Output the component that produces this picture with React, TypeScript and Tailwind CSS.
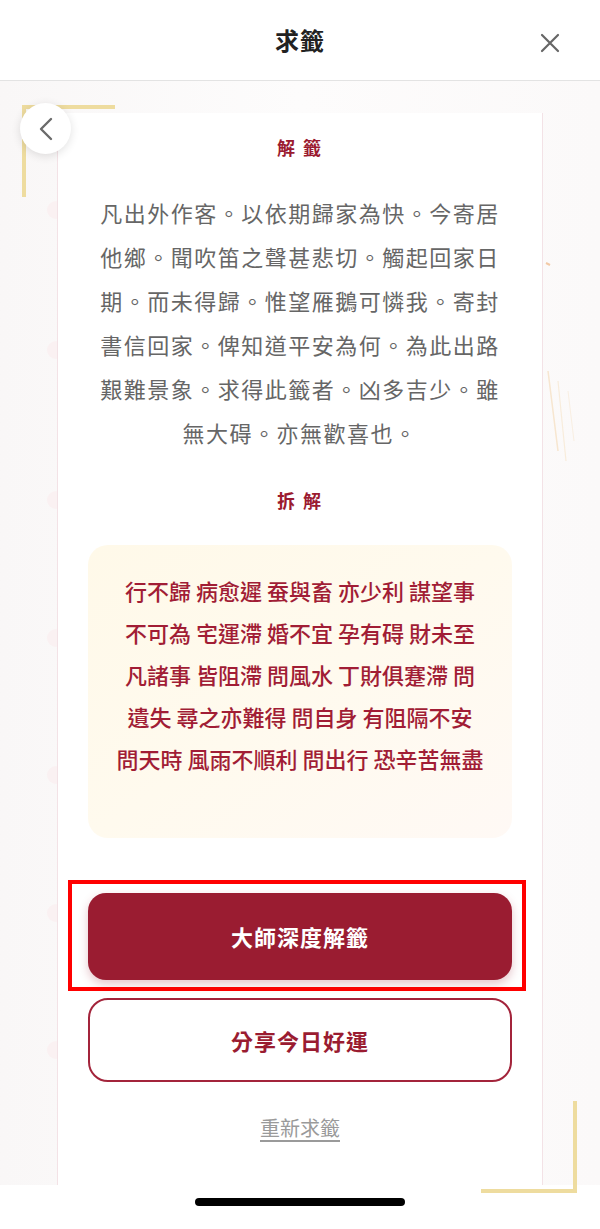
import React from "react";

const FONT = {
  fontFamily: '"Noto Sans CJK TC", "Noto Sans", sans-serif',
};

const INTERPRETATION =
  "凡出外作客。以依期歸家為快。今寄居他鄉。聞吹笛之聲甚悲切。觸起回家日期。而未得歸。惟望雁鵝可憐我。寄封書信回家。俾知道平安為何。為此出路艱難景象。求得此籤者。凶多吉少。雖無大碍。亦無歡喜也。";

const BREAKDOWN = [
  "行不歸 病愈遲 蚕與畜 亦少利 謀望事",
  "不可為 宅運滯 婚不宜 孕有碍 財未至",
  "凡諸事 皆阻滯 問風水 丁財俱蹇滯 問",
  "遺失 尋之亦難得 問自身 有阻隔不安",
  "問天時 風雨不順利 問出行 恐辛苦無盡",
];

// faint pink knobs peeking out behind the left edge of the card
const KNOBS = [210, 350, 500, 638, 775, 913, 1050];

const CloseIcon = () => (
  <svg width="20" height="20" viewBox="0 0 20 20" fill="none">
    <path
      d="M2 2L18 18M18 2L2 18"
      stroke="#666"
      strokeWidth="2.2"
      strokeLinecap="round"
    />
  </svg>
);

const BackIcon = () => (
  <svg width="14" height="24" viewBox="0 0 14 24" fill="none">
    <path
      d="M12 2L2 12L12 22"
      stroke="#6b6b6b"
      strokeWidth="2.4"
      strokeLinecap="round"
      strokeLinejoin="round"
    />
  </svg>
);

const Sparks = () => (
  <svg
    className="absolute left-[540px] top-[170px]"
    width="60"
    height="260"
    viewBox="0 0 60 260"
    fill="none"
  >
    <path d="M6 12L10 14" stroke="#f2c9a6" strokeWidth="2" />
    <path d="M8 120L18 200" stroke="#f7e6d0" strokeWidth="1.5" />
    <path d="M18 130L26 210" stroke="#f8ecdb" strokeWidth="1.2" />
    <path d="M28 140L34 190" stroke="#f9efe2" strokeWidth="1" />
  </svg>
);

const Heading = ({ children }: { children: React.ReactNode }) => (
  <h2 className="text-[18px] leading-[20px] font-bold tracking-[2px] text-[#9b1b30] whitespace-pre">
    {children}
  </h2>
);

export default function App() {
  return (
    <div
      className="relative flex h-[1229px] w-[600px] flex-col overflow-hidden bg-white"
      style={FONT}
    >
      {/* top bar */}
      <header className="relative flex h-[81px] shrink-0 items-center justify-center border-b border-[#e3e3e3] bg-white">
        <h1 className="text-[24px] font-bold tracking-[1px] text-[#222]">
          求籤
        </h1>
        <button className="absolute right-[40px] top-[33px]">
          <CloseIcon />
        </button>
      </header>

      <main className="relative flex-1 bg-gradient-to-r from-[#f9f7f7] via-[#fdfcfc] to-[#fbf9f9]">
        {KNOBS.map((y) => (
          <div
            key={y}
            className="absolute left-[47px] h-[18px] w-[18px] rounded-full bg-[#faf1f2]"
            style={{ top: y - 90 }}
          />
        ))}
        <Sparks />

        {/* card */}
        <section className="relative mx-[57px] mt-[32px] flex h-[1072px] flex-col items-center border-x border-[#f3e2e6] bg-white px-[30px]">
          <div className="mt-[24px]">
            <Heading>解 籤</Heading>
          </div>
          <p className="mt-[33px] w-[408px] text-center text-[22px] leading-[44px] tracking-[1.5px] text-[#666]">
            {INTERPRETATION}
          </p>

          <div className="mt-[36px]">
            <Heading>拆 解</Heading>
          </div>

          <div className="mt-[35px] h-[293px] w-full rounded-[20px] bg-gradient-to-br from-[#fff9e9] via-[#fffaee] to-[#fff9f5] pt-[24px]">
            {BREAKDOWN.map((line) => (
              <p
                key={line}
                className="text-center text-[22px] font-medium leading-[42px] text-[#a11d35] whitespace-pre"
              >
                {line}
              </p>
            ))}
          </div>

          <div className="mt-[42px] -ml-[20px] -mr-[14px] w-[458px] border-4 border-[#ff0000] pb-[7px] pl-[16px] pr-[10px] pt-[9px]">
            <button className="flex h-[87px] w-[424px] items-center justify-center rounded-[18px] bg-[#9a1c31] text-[22px] font-bold tracking-[1px] text-white shadow-[0_4px_10px_rgba(154,28,49,0.25)]">
              大師深度解籤
            </button>
          </div>

          <button className="mt-[7px] flex h-[84px] w-full items-center justify-center rounded-[20px] border-2 border-[#a3243b] bg-white text-[22px] font-bold tracking-[1px] text-[#9a1c31]">
            分享今日好運
          </button>

          <a className="mt-[34px] text-[20px] leading-[24px] text-[#9a9a9a] underline underline-offset-4">
            重新求籤
          </a>
        </section>

        {/* home indicator */}
        <div className="flex h-[44px] w-full items-center justify-center bg-white">
          <div className="mt-[-10px] h-[8px] w-[210px] rounded-full bg-black" />
        </div>

        {/* gold corner brackets */}
        <div className="absolute left-[22px] top-[24px] h-[92px] w-[93px] border-l-4 border-t-4 border-[#eedc9f]" />
        <div className="absolute left-[481px] top-[1020px] h-[92px] w-[96px] border-b-4 border-r-4 border-[#eedc9f]" />

        {/* floating back control */}
        <button className="absolute left-[20px] top-[22px] flex h-[51px] w-[51px] items-center justify-center rounded-full bg-white shadow-[0_2px_10px_rgba(0,0,0,0.12)]">
          <BackIcon />
        </button>
      </main>
    </div>
  );
}
